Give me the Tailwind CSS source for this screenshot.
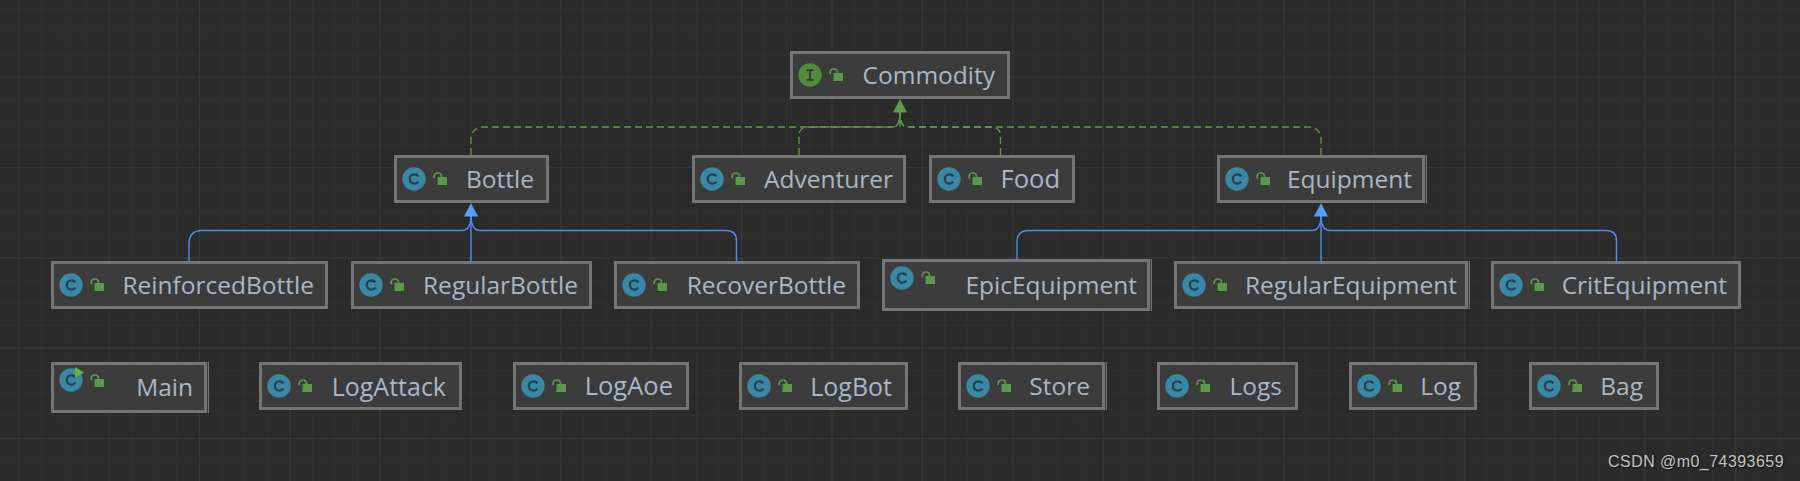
<!DOCTYPE html>
<html>
<head>
<meta charset="utf-8">
<script src="https://cdn.jsdelivr.net/npm/@tailwindcss/browser@4"></script>
</head>
<body class="m-0">
<svg width="0" height="0" class="absolute">
  <defs>
    <g id="lock"><path d="M1.2 6.2V4.2C1.2 2.2 2.8 1 4.8 1C6.8 1 8.4 2.2 8.4 4.2V5" fill="none" stroke="#5a9a4a" stroke-width="1.7"/><rect x="4.6" y="5" width="9.4" height="8" fill="#5a9a4a"/></g>
    <g id="c"><circle cx="12" cy="12" r="11.7" fill="#3b87a6"/><path d="M16.4 9.4C15.4 8 14 7.4 12.4 7.4C9.6 7.4 7.8 9.4 7.8 12C7.8 14.6 9.6 16.6 12.4 16.6C14 16.6 15.4 16 16.4 14.6" fill="none" stroke="#24414f" stroke-width="2.3"/></g>
    <g id="i"><circle cx="12" cy="12" r="11.7" fill="#538b3c"/><path d="M8.6 7.2H15.4M8.6 16.8H15.4M12 7.2V16.8" fill="none" stroke="#2c3f24" stroke-width="1.8"/></g>
  </defs>
</svg>
<div class="relative w-[1800px] h-[481px] overflow-hidden bg-[#2b2b2b] [font-family:'Open_Sans','Noto_Sans',sans-serif] text-[#a9b7c6] [background-image:linear-gradient(#383838_1px,transparent_1px),linear-gradient(90deg,#383838_1px,transparent_1px),linear-gradient(#303030_1px,transparent_1px),linear-gradient(90deg,#303030_1px,transparent_1px)] [background-size:90.37px_90.37px,90.37px_90.37px,22.59px_22.59px,22.59px_22.59px] [background-position:0_76.7px,18.4px_0,0_8.9px,18.4px_0]">

  <svg class="absolute inset-0" width="1800" height="481" fill="none">
    <g stroke="#5f9c49" stroke-width="1.3" stroke-dasharray="7 4">
      <path d="M471 155V140Q471 127 484 127H893Q900 127 900 112"/>
      <path d="M799 155V136Q799 127 808 127H893Q900 127 900 112"/>
      <path d="M1000.5 155V136Q1000.5 127 991 127H907Q900 127 900 112"/>
      <path d="M1321 155V140Q1321 127 1308 127H907Q900 127 900 112"/>
    </g>
    <path d="M900 127V110" stroke="#5f9c49" stroke-width="1.3"/>
    <path d="M900 99L907 112.5H893Z" fill="#5f9c49"/>
    <g stroke="#4f8fec" stroke-width="1.4">
      <path d="M189 261V244Q189 230.5 202 230.5H462Q471 230.5 471 215"/>
      <path d="M736.5 261V241Q736.5 230.5 726 230.5H480Q471 230.5 471 215"/>
      <path d="M471 261V215"/>
      <path d="M1017 259V242Q1017 230.5 1029 230.5H1312Q1321 230.5 1321 215"/>
      <path d="M1616.5 261V241Q1616.5 230.5 1606 230.5H1330Q1321 230.5 1321 215"/>
      <path d="M1321 261V215"/>
    </g>
    <path d="M471 203L478 216.5H464Z" fill="#589df6"/>
    <path d="M1321 203L1328 216.5H1314Z" fill="#589df6"/>
  </svg>

  <!-- row 1 -->
  <div class="absolute left-[790px] top-[51px] w-[220px] h-[48px] flex items-center border-[3px] border-[#757575] bg-[#3c3c3c] pl-[5px] pr-[12px]">
    <svg width="24" height="24" class="shrink-0"><use href="#i"/></svg>
    <svg width="14" height="14" class="shrink-0 ml-[7px]"><use href="#lock"/></svg>
    <span class="ml-auto text-[24.5px] leading-none whitespace-nowrap">Commodity</span>
  </div>

  <!-- row 2 -->
  <div class="absolute left-[394px] top-[155px] w-[155px] h-[48px] flex items-center border-[3px] border-[#757575] bg-[#3c3c3c] pl-[5px] pr-[12px]">
    <svg width="24" height="24" class="shrink-0"><use href="#c"/></svg>
    <svg width="14" height="14" class="shrink-0 ml-[7px]"><use href="#lock"/></svg>
    <span class="ml-auto text-[24.5px] leading-none whitespace-nowrap">Bottle</span>
  </div>
  <div class="absolute left-[692px] top-[155px] w-[214px] h-[48px] flex items-center border-[3px] border-[#757575] bg-[#3c3c3c] pl-[5px] pr-[10px]">
    <svg width="24" height="24" class="shrink-0"><use href="#c"/></svg>
    <svg width="14" height="14" class="shrink-0 ml-[7px]"><use href="#lock"/></svg>
    <span class="ml-auto text-[24.5px] leading-none whitespace-nowrap">Adventurer</span>
  </div>
  <div class="absolute left-[929px] top-[155px] w-[146px] h-[48px] flex items-center border-[3px] border-[#757575] bg-[#3c3c3c] pl-[5px] pr-[12px]">
    <svg width="24" height="24" class="shrink-0"><use href="#c"/></svg>
    <svg width="14" height="14" class="shrink-0 ml-[7px]"><use href="#lock"/></svg>
    <span class="ml-auto text-[25.5px] leading-none whitespace-nowrap">Food</span>
  </div>
  <div class="absolute left-[1217px] top-[155px] w-[208px] h-[48px] flex items-center border-[3px] border-[#757575] bg-[#3c3c3c] shadow-[1px_0_0_#3c3c3c,2px_0_0_#757575] pl-[5px] pr-[10px]">
    <svg width="24" height="24" class="shrink-0"><use href="#c"/></svg>
    <svg width="14" height="14" class="shrink-0 ml-[7px]"><use href="#lock"/></svg>
    <span class="ml-auto text-[24.5px] leading-none whitespace-nowrap">Equipment</span>
  </div>

  <!-- row 3 -->
  <div class="absolute left-[51px] top-[261px] w-[277px] h-[48px] flex items-center border-[3px] border-[#757575] bg-[#3c3c3c] pl-[5px] pr-[11px]">
    <svg width="24" height="24" class="shrink-0"><use href="#c"/></svg>
    <svg width="14" height="14" class="shrink-0 ml-[7px]"><use href="#lock"/></svg>
    <span class="ml-auto text-[24.5px] leading-none whitespace-nowrap">ReinforcedBottle</span>
  </div>
  <div class="absolute left-[351px] top-[261px] w-[241px] h-[48px] flex items-center border-[3px] border-[#757575] bg-[#3c3c3c] pl-[5px] pr-[11px]">
    <svg width="24" height="24" class="shrink-0"><use href="#c"/></svg>
    <svg width="14" height="14" class="shrink-0 ml-[7px]"><use href="#lock"/></svg>
    <span class="ml-auto text-[24.5px] leading-none whitespace-nowrap">RegularBottle</span>
  </div>
  <div class="absolute left-[614px] top-[261px] w-[246px] h-[48px] flex items-center border-[3px] border-[#757575] bg-[#3c3c3c] pl-[5px] pr-[11px]">
    <svg width="24" height="24" class="shrink-0"><use href="#c"/></svg>
    <svg width="14" height="14" class="shrink-0 ml-[7px]"><use href="#lock"/></svg>
    <span class="ml-auto text-[24.5px] leading-none whitespace-nowrap">RecoverBottle</span>
  </div>
  <div class="absolute left-[882px] top-[259px] w-[268px] h-[52px] flex items-center border-[3px] border-[#757575] bg-[#3c3c3c] shadow-[1px_0_0_#3c3c3c,2px_0_0_#757575] pl-[5px] pr-[10px]">
    <svg width="24" height="24" class="shrink-0 self-start mt-[4px]"><use href="#c"/></svg>
    <svg width="14" height="14" class="shrink-0 ml-[7px] self-start mt-[9px]"><use href="#lock"/></svg>
    <span class="ml-auto text-[24.5px] leading-none whitespace-nowrap">EpicEquipment</span>
  </div>
  <div class="absolute left-[1174px] top-[261px] w-[294px] h-[48px] flex items-center border-[3px] border-[#757575] bg-[#3c3c3c] shadow-[1px_0_0_#3c3c3c,2px_0_0_#757575] pl-[5px] pr-[8px]">
    <svg width="24" height="24" class="shrink-0"><use href="#c"/></svg>
    <svg width="14" height="14" class="shrink-0 ml-[7px]"><use href="#lock"/></svg>
    <span class="ml-auto text-[24.5px] leading-none whitespace-nowrap">RegularEquipment</span>
  </div>
  <div class="absolute left-[1491px] top-[261px] w-[250px] h-[48px] flex items-center border-[3px] border-[#757575] bg-[#3c3c3c] pl-[5px] pr-[11px]">
    <svg width="24" height="24" class="shrink-0"><use href="#c"/></svg>
    <svg width="14" height="14" class="shrink-0 ml-[7px]"><use href="#lock"/></svg>
    <span class="ml-auto text-[24.5px] leading-none whitespace-nowrap">CritEquipment</span>
  </div>

  <!-- row 4 -->
  <div class="absolute left-[51px] top-[362px] w-[156px] h-[51px] flex items-center border-[3px] border-[#757575] bg-[#3c3c3c] shadow-[1px_0_0_#3c3c3c,2px_0_0_#757575] pl-[5px] pr-[11px]">
    <div class="relative shrink-0 self-start mt-[3px] w-[24px] h-[24px]">
      <svg width="24" height="24"><use href="#c"/></svg>
      <svg width="9" height="11" class="absolute left-[16px] top-[-1px]"><path d="M0 0L9 5.5L0 11Z" fill="#62b543"/></svg>
    </div>
    <svg width="14" height="14" class="shrink-0 ml-[7px] self-start mt-[9px]"><use href="#lock"/></svg>
    <span class="ml-auto text-[24.5px] leading-none whitespace-nowrap">Main</span>
  </div>
  <div class="absolute left-[259px] top-[362px] w-[203px] h-[48px] flex items-center border-[3px] border-[#757575] bg-[#3c3c3c] pl-[5px] pr-[13px]">
    <svg width="24" height="24" class="shrink-0"><use href="#c"/></svg>
    <svg width="14" height="14" class="shrink-0 ml-[7px]"><use href="#lock"/></svg>
    <span class="ml-auto text-[25px] leading-none whitespace-nowrap">LogAttack</span>
  </div>
  <div class="absolute left-[513px] top-[362px] w-[176px] h-[48px] flex items-center border-[3px] border-[#757575] bg-[#3c3c3c] pl-[5px] pr-[13px]">
    <svg width="24" height="24" class="shrink-0"><use href="#c"/></svg>
    <svg width="14" height="14" class="shrink-0 ml-[7px]"><use href="#lock"/></svg>
    <span class="ml-auto text-[25.5px] leading-none whitespace-nowrap">LogAoe</span>
  </div>
  <div class="absolute left-[739px] top-[362px] w-[169px] h-[48px] flex items-center border-[3px] border-[#757575] bg-[#3c3c3c] pl-[5px] pr-[13px]">
    <svg width="24" height="24" class="shrink-0"><use href="#c"/></svg>
    <svg width="14" height="14" class="shrink-0 ml-[7px]"><use href="#lock"/></svg>
    <span class="ml-auto text-[25px] leading-none whitespace-nowrap">LogBot</span>
  </div>
  <div class="absolute left-[958px] top-[362px] w-[147px] h-[48px] flex items-center border-[3px] border-[#757575] bg-[#3c3c3c] shadow-[1px_0_0_#3c3c3c,2px_0_0_#757575] pl-[5px] pr-[12px]">
    <svg width="24" height="24" class="shrink-0"><use href="#c"/></svg>
    <svg width="14" height="14" class="shrink-0 ml-[7px]"><use href="#lock"/></svg>
    <span class="ml-auto text-[24.5px] leading-none whitespace-nowrap">Store</span>
  </div>
  <div class="absolute left-[1157px] top-[362px] w-[141px] h-[48px] flex items-center border-[3px] border-[#757575] bg-[#3c3c3c] pl-[5px] pr-[13px]">
    <svg width="24" height="24" class="shrink-0"><use href="#c"/></svg>
    <svg width="14" height="14" class="shrink-0 ml-[7px]"><use href="#lock"/></svg>
    <span class="ml-auto text-[24.5px] leading-none whitespace-nowrap">Logs</span>
  </div>
  <div class="absolute left-[1349px] top-[362px] w-[128px] h-[48px] flex items-center border-[3px] border-[#757575] bg-[#3c3c3c] pl-[5px] pr-[13px]">
    <svg width="24" height="24" class="shrink-0"><use href="#c"/></svg>
    <svg width="14" height="14" class="shrink-0 ml-[7px]"><use href="#lock"/></svg>
    <span class="ml-auto text-[24.5px] leading-none whitespace-nowrap">Log</span>
  </div>
  <div class="absolute left-[1529px] top-[362px] w-[130px] h-[48px] flex items-center border-[3px] border-[#757575] bg-[#3c3c3c] pl-[5px] pr-[13px]">
    <svg width="24" height="24" class="shrink-0"><use href="#c"/></svg>
    <svg width="14" height="14" class="shrink-0 ml-[7px]"><use href="#lock"/></svg>
    <span class="ml-auto text-[24.5px] leading-none whitespace-nowrap">Bag</span>
  </div>

  <span class="absolute left-[1608px] top-[453px] text-[16px] leading-[18px] tracking-[0.45px] whitespace-nowrap text-[#c4c4c4] [font-family:'Liberation_Sans',sans-serif] [text-shadow:1px_1px_1px_#111]">CSDN @m0_74393659</span>
</div>
</body>
</html>
